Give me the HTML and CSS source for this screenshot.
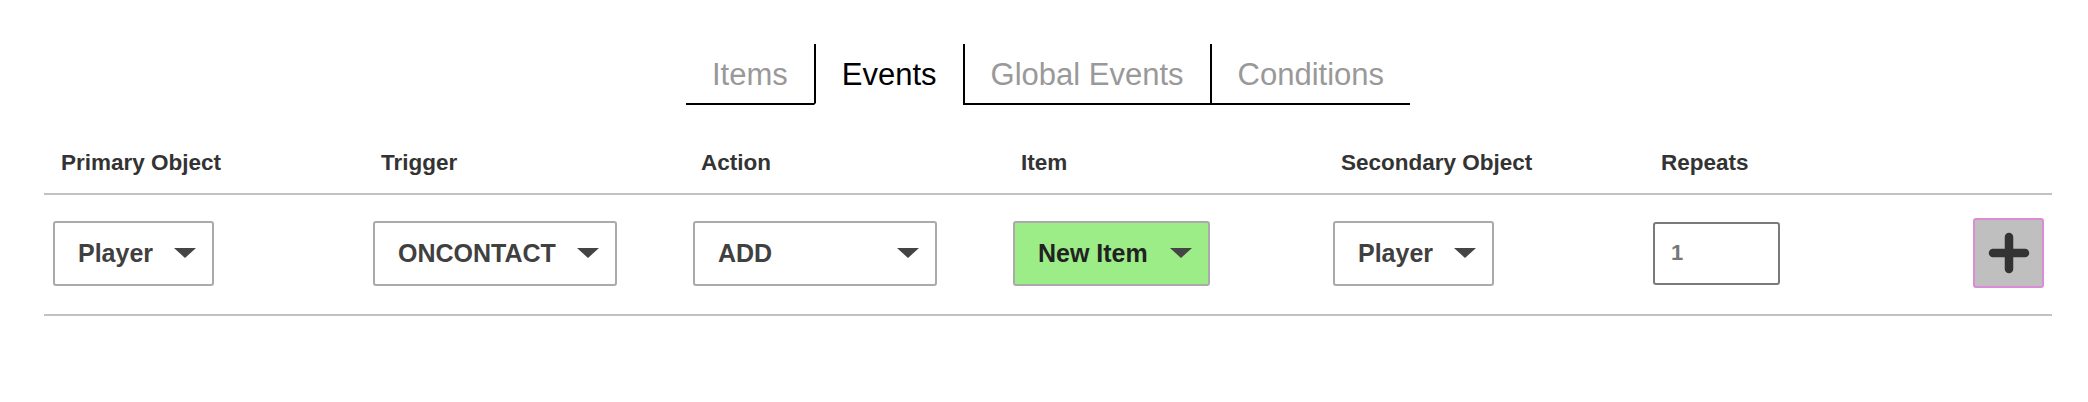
FILE: index.html
```html
<!DOCTYPE html>
<html lang="en">
<head>
<meta charset="utf-8">
<title>Events</title>
<link rel="stylesheet" href="styles.css">
</head>
<body>
  <nav class="tabs">
    <div class="tab">Items</div>
    <div class="tab tab-active">Events</div>
    <div class="tab">Global Events</div>
    <div class="tab">Conditions</div>
  </nav>

  <div class="table">
    <div class="row row-head">
      <div class="cell head">Primary Object</div>
      <div class="cell head">Trigger</div>
      <div class="cell head">Action</div>
      <div class="cell head">Item</div>
      <div class="cell head">Secondary Object</div>
      <div class="cell head">Repeats</div>
      <div class="cell head"></div>
    </div>
    <div class="row row-body">
      <div class="cell">
        <div class="select select-sm"><span>Player</span><i class="caret"></i></div>
      </div>
      <div class="cell">
        <div class="select select-lg"><span>ONCONTACT</span><i class="caret"></i></div>
      </div>
      <div class="cell">
        <div class="select select-lg"><span>ADD</span><i class="caret"></i></div>
      </div>
      <div class="cell">
        <div class="select select-md select-green"><span>New Item</span><i class="caret"></i></div>
      </div>
      <div class="cell">
        <div class="select select-sm"><span>Player</span><i class="caret"></i></div>
      </div>
      <div class="cell">
        <div class="number">1</div>
      </div>
      <div class="cell">
        <button class="add-btn" type="button" aria-label="Add">
          <svg width="42" height="42" viewBox="0 0 42 42"><path d="M21 5 V37 M5 21 H37" stroke="#333" stroke-width="8.5" stroke-linecap="round" fill="none"/></svg>
        </button>
      </div>
    </div>
  </div>
</body>
</html>
```

FILE: styles.css
```css
* { box-sizing: border-box; }

body {
  margin: 0;
  background: #fff;
  font-family: "Liberation Sans", Arial, Helvetica, sans-serif;
}

.tabs {
  display: flex;
  justify-content: center;
  padding: 44px 0 0 8px;
}

.tab {
  height: 61px;
  padding: 2px 26px 0;
  display: flex;
  align-items: center;
  font-size: 31px;
  color: #999;
  border-bottom: 2px solid #000;
}

.tab + .tab {
  border-left: 2px solid #000;
}

.tab-active {
  color: #000;
  border-bottom-color: transparent;
}

.table {
  margin: 27px 0 0 44px;
  width: 2008px;
}

.row {
  display: grid;
  grid-template-columns: repeat(6, 320px) 88px;
  border-bottom: 2px solid #c2c2c2;
}

.row-head {
  height: 63px;
  align-items: center;
}

.row-body {
  height: 121px;
  padding-bottom: 3px;
  align-items: center;
}

.cell {
  padding-left: 9px;
}

.head {
  padding-left: 17px;
  font-size: 22.5px;
  font-weight: bold;
  color: #333;
}

.select {
  height: 65px;
  display: flex;
  align-items: center;
  padding: 0 16px 0 23px;
  border: 2px solid #aaa;
  border-radius: 3px;
  background: #fff;
  font-size: 25px;
  font-weight: bold;
  color: #404040;
}

.select-sm { width: 161px; }
.select-md { width: 197px; }
.select-lg { width: 244px; }

.select-green {
  background: #9cec88;
  color: #222;
}

.caret {
  margin-left: auto;
  width: 0;
  height: 0;
  border-left: 11px solid transparent;
  border-right: 11px solid transparent;
  border-top: 10px solid #444;
}

.number {
  width: 127px;
  height: 63px;
  display: flex;
  align-items: center;
  padding-left: 16px;
  border: 2px solid #7a7a7a;
  border-radius: 3px;
  font-size: 22px;
  font-weight: bold;
  color: #777;
}

.add-btn {
  width: 71px;
  height: 70px;
  padding: 0;
  display: flex;
  align-items: center;
  justify-content: center;
  background: #c0bfc0;
  border: 2px solid #da8cd6;
  border-radius: 3px;
}
```
